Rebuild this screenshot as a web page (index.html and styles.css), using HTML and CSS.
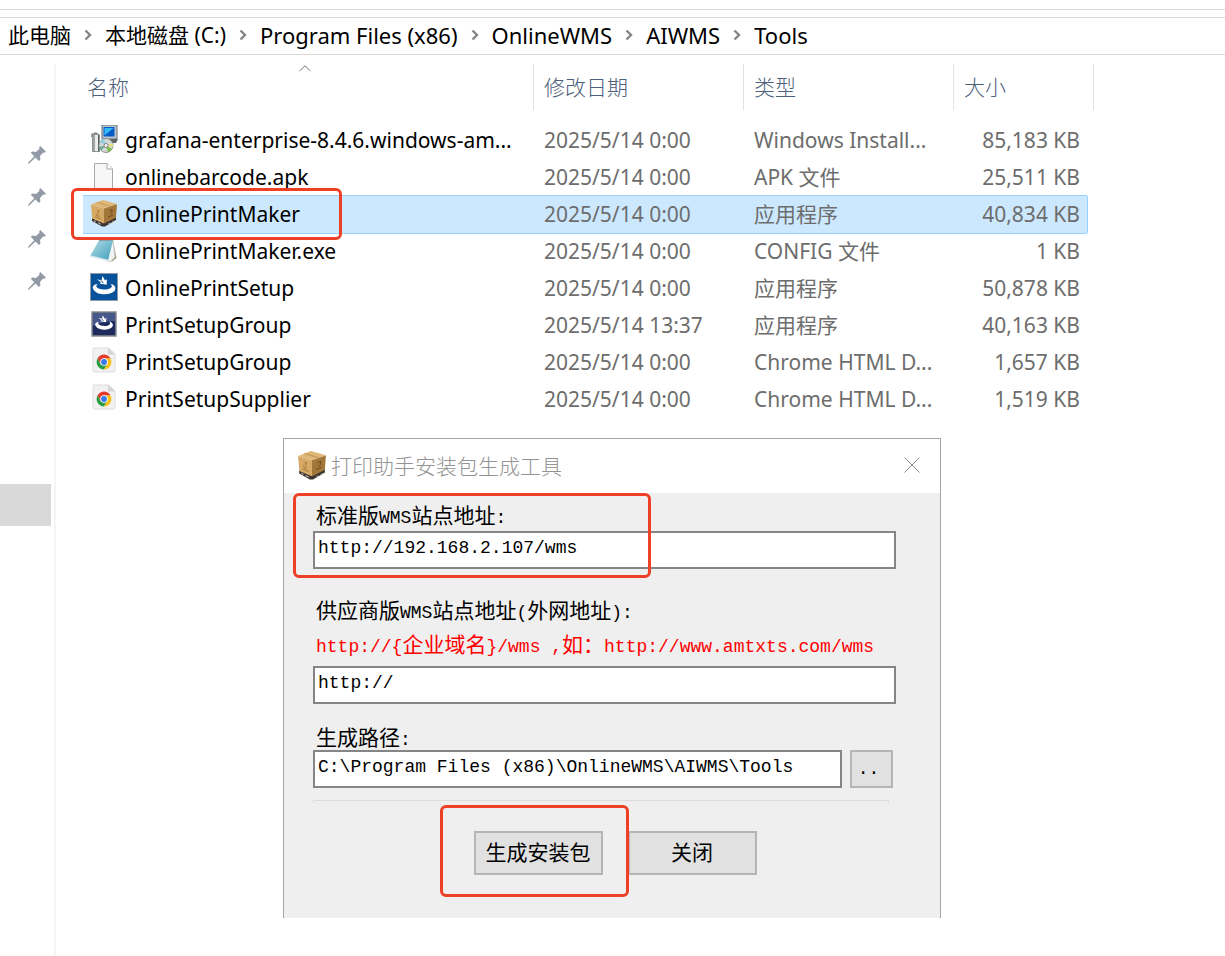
FILE: index.html
```
<!DOCTYPE html>
<html lang="zh-CN">
<head>
    <meta charset="UTF-8">
    <meta name="viewport" content="width=device-width, initial-scale=1.0">
    <title>Tools</title>
    <link rel="stylesheet" href="styles.css">
</head>
<body>
    <!-- Shared icons -->
    <svg class="sprite" aria-hidden="true">
        <symbol id="chevron" viewBox="0 0 8 12">
            <path d="M1.5 1.5L6 6L1.5 10.5" fill="none" stroke="#858585" stroke-width="2.4"/>
        </symbol>
        <symbol id="pin" viewBox="0 0 18 18">
            <path d="M12.3 0L18 5.7L16.4 6.8L15.2 6.4L12 10L12.4 13.6L11 15L7.4 11.4L1.2 17.6L0 17.8L.3 16.6L6.2 10.2L2.8 6.8L4.2 5.6L8 6L11.5 2.8L11.2 1.3Z" fill="#929ba5"/>
        </symbol>
        <symbol id="box" viewBox="0 0 28 28">
            <path d="M2 19L14 24L26 18L26 21L15 27.5L12 27.5L2 22Z" fill="#3b3632"/>
            <path d="M4 21l2 1v1.5l-2-1zM8 23l3 1.4v1.4L8 24.5zM18 24.5l2-1v1.4L18 26zM22 22.5l2-1.2v1.2l-2 1.4z" fill="#a69b8c"/>
            <path d="M1 5.5L13.8 9.5L14 24.5L2.2 19.5Z" fill="#d6a964"/>
            <path d="M13.8 9.5L27 5L26 18.5L14 24.5Z" fill="#a3763a"/>
            <path d="M1 5.5L13 1L27 5L13.8 9.5Z" fill="#dfb878"/>
            <path d="M6 3.6L19.5 7.6L21.5 6.9L8 2.9Z" fill="#c79b5b"/>
            <path d="M7 11.4l2.4.8M8.2 12v3.4M6 14.5l1 2.2 2.4.6M5 17.8l6 2.2" stroke="#a5773a" stroke-width=".9" fill="none"/>
            <path d="M19 11.8l3-1.2v3l-2 1.6M18 18.2l5-2.2" stroke="#6d4618" stroke-width=".9" fill="none"/>
        </symbol>
        <symbol id="swirl" viewBox="0 0 28 28">
            <path d="M8 11C4 11.4 1.6 13.4 3.4 16.4C6.6 22.2 19.5 22.8 24.2 18.2C27 15 24.4 11.6 20.4 10.8C23.4 13.4 21.4 15.8 16.8 16.4C11.4 17 6.6 15.4 6.4 13.2C6.3 12.2 7 11.5 8 11Z" fill="#fff"/>
            <path d="M7 6.2L11 9.4L9.4 10.4L16.6 11.8L17 6.2L15.2 7.6L12.4 3L11.6 7.4Z" fill="#fff"/>
            <path d="M11.2 7.6L13.4 10.2" stroke="#07529b"/>
        </symbol>
        <symbol id="chrome-page" viewBox="0 0 28 28">
            <path d="M3 1H19L25 7V23.5Q25 25 23.5 25H4.5Q3 25 3 23.5Z" fill="#f1f1f1" stroke="#dedede"/>
            <path d="M18 1V7.5H25Z" fill="#d5d5d5"/>
            <path d="M7.6 11.3A7.4 7.4 0 0 0 14 22.4L17.2 16.9H10.8Z" fill="#299c46"/>
            <path d="M20.4 11.3A7.4 7.4 0 0 1 14 22.4L17.2 16.9L14 11.3Z" fill="#fbc116"/>
            <path d="M7.6 11.3A7.4 7.4 0 0 1 20.4 11.3H14L10.8 16.9Z" fill="#e33b2e"/>
            <circle cx="14" cy="15" r="3.8" fill="#fff"/>
            <circle cx="14" cy="15" r="2.9" fill="#3478ea"/>
        </symbol>
    </svg>

    <div class="toolbar"></div>

    <!-- Address bar -->
    <nav class="address">
        <a href="#">此电脑</a>
        <svg class="chevron"><use href="#chevron"/></svg>
        <a href="#">本地磁盘 (C:)</a>
        <svg class="chevron"><use href="#chevron"/></svg>
        <a href="#" class="folder">Program Files (x86)</a>
        <svg class="chevron"><use href="#chevron"/></svg>
        <a href="#" class="folder">OnlineWMS</a>
        <svg class="chevron"><use href="#chevron"/></svg>
        <a href="#" class="folder">AIWMS</a>
        <svg class="chevron"><use href="#chevron"/></svg>
        <a href="#" class="folder">Tools</a>
    </nav>

    <div class="explorer">
        <!-- Quick access -->
        <aside class="sidebar">
            <div class="pin"><svg><use href="#pin"/></svg></div>
            <div class="pin"><svg><use href="#pin"/></svg></div>
            <div class="pin"><svg><use href="#pin"/></svg></div>
            <div class="pin"><svg><use href="#pin"/></svg></div>
            <div class="current"></div>
        </aside>

        <main class="content">
            <table class="files">
                <colgroup>
                    <col>
                    <col class="col-date">
                    <col class="col-type">
                    <col class="col-size">
                    <col class="col-end">
                </colgroup>
                <thead>
                    <tr>
                        <th>名称
                            <svg class="sort" viewBox="0 0 12 7"><path d="M.5 6L6 .8L11.5 6" fill="none" stroke="#777"/></svg>
                        </th>
                        <th>修改日期</th>
                        <th>类型</th>
                        <th colspan="2">大小</th>
                    </tr>
                </thead>
                <tbody>
                    <tr>
                        <td><div class="name">
                            <svg viewBox="0 0 28 28">
                                <path d="M1 9L6 7L10 10V27H2V12H1Z" fill="#8d9293"/>
                                <path d="M3 10H8V26H3Z" fill="#eceeed"/>
                                <path d="M4 10V26M8.5 10V26" stroke="#555b5d"/>
                                <path d="M12 0H27V14H12Z" fill="#bfc6ca" stroke="#667078"/>
                                <path d="M13.5 2H24.5V11.5H13.5Z" fill="#075bc5"/>
                                <path d="M14.5 3H23.5L14.5 10.5Z" fill="#35baf5"/>
                                <path d="M18 14H28L26 18H16Z" fill="#5f6466"/>
                                <circle cx="16" cy="20.5" r="7" fill="#d4d9d6" stroke="#8d9693"/>
                                <path d="M16 20.5L10 17A7 7 0 0 1 14 13.8Z" fill="#8ed0df"/>
                                <path d="M16 20.5L22 24A7 7 0 0 1 18 27.2Z" fill="#7dbd4d"/>
                                <path d="M16 20.5L22.8 18.5V22Z" fill="#e9df78"/>
                                <path d="M16 20.5L9 22L11 25.5Z" fill="#6ba99a"/>
                                <circle cx="16" cy="20.5" r="2" fill="#fff" stroke="#777"/>
                            </svg>
                            grafana-enterprise-8.4.6.windows-am...
                        </div></td>
                        <td>2025/5/14 0:00</td>
                        <td>Windows Install...</td>
                        <td>85,183 KB</td>
                        <td></td>
                    </tr>
                    <tr>
                        <td><div class="name">
                            <svg viewBox="0 0 28 28">
                                <path d="M4.5 1.5H17L22.5 7V28H4.5Z" fill="#f7f7f7" stroke="#a7a7a7"/>
                                <path d="M17 1.5V7H22.5" fill="#fff" stroke="#a7a7a7"/>
                            </svg>
                            onlinebarcode.apk
                        </div></td>
                        <td>2025/5/14 0:00</td>
                        <td>APK 文件</td>
                        <td>25,511 KB</td>
                        <td></td>
                    </tr>
                    <tr class="selected">
                        <td><div class="name">
                            <svg><use href="#box"/></svg>
                            OnlinePrintMaker
                            <span class="mark mark-file"></span>
                        </div></td>
                        <td>2025/5/14 0:00</td>
                        <td>应用程序</td>
                        <td>40,834 KB</td>
                        <td></td>
                    </tr>
                    <tr>
                        <td><div class="name">
                            <svg viewBox="0 0 28 28">
                                <defs>
                                    <linearGradient id="note" x1="0" y1="0" x2="1" y2="1">
                                        <stop offset="0" stop-color="#b5dfe8"/>
                                        <stop offset="1" stop-color="#3f9dbb"/>
                                    </linearGradient>
                                </defs>
                                <path d="M23 5L26.5 22L22 25.5L17 24Z" fill="#a99a83"/>
                                <path d="M23 4L25 21L20 26L16 24Z" fill="#eef3f3" stroke="#b5babb" stroke-width=".6"/>
                                <path d="M9 4.5L23 4L18 24.5L0 20Z" fill="url(#note)"/>
                                <path d="M9 4.5L23 4" stroke="#8aa0a6" stroke-width="1.5"/>
                                <path d="M0 20L18 24.5" stroke="#d9e9ee" stroke-width="1.5"/>
                            </svg>
                            OnlinePrintMaker.exe
                        </div></td>
                        <td>2025/5/14 0:00</td>
                        <td>CONFIG 文件</td>
                        <td>1 KB</td>
                        <td></td>
                    </tr>
                    <tr>
                        <td><div class="name">
                            <svg viewBox="0 0 28 28">
                                <path d="M.5 .5H27.5V27.5H.5Z" fill="#07529b" stroke="#8c99a5"/>
                                <use href="#swirl"/>
                            </svg>
                            OnlinePrintSetup
                        </div></td>
                        <td>2025/5/14 0:00</td>
                        <td>应用程序</td>
                        <td>50,878 KB</td>
                        <td></td>
                    </tr>
                    <tr>
                        <td><div class="name">
                            <svg viewBox="0 0 28 28">
                                <path d="M2 2H26V26H2Z" fill="#1d2b5c" stroke="#8d9094" stroke-width="1.5"/>
                                <path d="M3 3H25V11Q14 11 3 16Z" fill="#46588a"/>
                                <use href="#swirl" x="3" y="3" width="22" height="22"/>
                            </svg>
                            PrintSetupGroup
                        </div></td>
                        <td>2025/5/14 13:37</td>
                        <td>应用程序</td>
                        <td>40,163 KB</td>
                        <td></td>
                    </tr>
                    <tr>
                        <td><div class="name">
                            <svg><use href="#chrome-page"/></svg>
                            PrintSetupGroup
                        </div></td>
                        <td>2025/5/14 0:00</td>
                        <td>Chrome HTML D...</td>
                        <td>1,657 KB</td>
                        <td></td>
                    </tr>
                    <tr>
                        <td><div class="name">
                            <svg><use href="#chrome-page"/></svg>
                            PrintSetupSupplier
                        </div></td>
                        <td>2025/5/14 0:00</td>
                        <td>Chrome HTML D...</td>
                        <td>1,519 KB</td>
                        <td></td>
                    </tr>
                </tbody>
            </table>

            <!-- Package generator -->
            <section class="dialog">
                <header class="dialog-header">
                    <svg class="dialog-icon"><use href="#box"/></svg>
                    <h1>打印助手安装包生成工具</h1>
                    <button class="close" type="button" aria-label="关闭窗口">
                        <svg viewBox="0 0 16 16"><path d="M.5 .5L15.5 15.5M15.5 .5L.5 15.5" stroke="#8a8a8a"/></svg>
                    </button>
                </header>
                <form class="dialog-body">
                    <div class="field">
                        <label for="site">标准版<span class="latin">WMS</span>站点地址<span class="latin">:</span></label>
                        <input type="text" id="site" value="http://192.168.2.107/wms">
                        <span class="mark mark-site"></span>
                    </div>
                    <div class="field">
                        <label for="supplier">供应商版<span class="latin">WMS</span>站点地址<span class="latin">(</span>外网地址<span class="latin">):</span></label>
                        <p class="hint"><span class="latin">http://{</span>企业域名<span class="latin">}/wms ,</span>如：<span class="latin">http://www.amtxts.com/wms</span></p>
                        <input type="text" id="supplier" value="http://">
                    </div>
                    <div class="field field-path">
                        <label for="path">生成路径<span class="latin">:</span></label>
                        <div class="path-row">
                            <input type="text" id="path" value="C:\Program Files (x86)\OnlineWMS\AIWMS\Tools">
                            <button class="btn btn-browse" type="button">..</button>
                        </div>
                    </div>
                    <div class="divider"></div>
                    <div class="actions">
                        <div class="action">
                            <button class="btn" type="button">生成安装包</button>
                            <span class="mark mark-build"></span>
                        </div>
                        <button class="btn" type="button">关闭</button>
                    </div>
                </form>
            </section>
        </main>
    </div>
</body>
</html>
```
FILE: styles.css
```
* {
    margin: 0;
    padding: 0;
    box-sizing: border-box;
}

body {
    display: flex;
    flex-direction: column;
    min-height: 100vh;
    font-family: "Noto Sans", "Noto Sans CJK SC", sans-serif;
    font-size: 21px;
    background: #fff;
    color: #000;
}

svg {
    display: block;
    flex-shrink: 0;
}

.sprite {
    position: absolute;
    width: 0;
    height: 0;
}

/* Address bar */
.toolbar {
    height: 10px;
    border-bottom: 1px solid #d9d9d9;
}

.address {
    display: flex;
    align-items: center;
    gap: 13px;
    height: 38px;
    margin-top: 7px;
    padding-left: 8px;
    padding-bottom: 2px;
    border-top: 1px solid #d9d9d9;
    border-bottom: 1px solid #d9d9d9;
    white-space: nowrap;
}

.address a {
    color: #000;
    line-height: 30px;
    text-decoration: none;
}

.address .folder {
    font-size: 22px;
}

.chevron {
    width: 8px;
    height: 12px;
}

.explorer {
    display: flex;
    flex: 1;
    margin-top: 9px;
}

/* Sidebar */
.sidebar {
    width: 56px;
    padding-top: 70px;
    border-right: 2px solid #f5f5f5;
}

.pin {
    display: flex;
    align-items: center;
    justify-content: flex-end;
    height: 42px;
    padding-right: 8px;
}

.pin svg {
    width: 18px;
    height: 18px;
}

.current {
    height: 42px;
    margin-top: 182px;
    margin-right: 3px;
    background: #d9d9d9;
}

.content {
    flex: 1;
    padding-left: 27px;
    padding-right: 131px;
}

/* File list */
.files {
    width: 100%;
    table-layout: fixed;
    border-spacing: 0;
    white-space: nowrap;
}

.col-date,
.col-type {
    width: 210px;
}

.col-size {
    width: 133px;
}

.col-end {
    width: 7px;
}

.files th {
    position: relative;
    height: 46px;
    padding-left: 10px;
    padding-bottom: 2px;
    border-right: 1px solid #e2e2e2;
    color: #4c607a;
    font-weight: 300;
    text-align: left;
}

.files th:first-child {
    padding-left: 4px;
}

.sort {
    position: absolute;
    top: 1px;
    left: calc(50% - 9px);
    width: 12px;
    height: 7px;
}

.files tbody::before {
    content: "";
    display: block;
    height: 12px;
}

.files td {
    height: 37px;
    padding-left: 10px;
    padding-bottom: 2px;
    line-height: 34px;
    color: #6d6d6d;
}

.files td:first-child {
    padding-left: 7px;
    color: #000;
}

.files td:nth-child(4) {
    padding-right: 7px;
    text-align: right;
}

.files td:last-child {
    padding: 0;
}

.name {
    position: relative;
    display: flex;
    align-items: center;
    gap: 7px;
}

.name svg {
    width: 28px;
    height: 28px;
    margin-bottom: 2px;
}

.selected td:not(:last-child) {
    background: #cce8ff;
    box-shadow: 0 -1px #99d1ff, 0 1px #99d1ff;
}

.selected td:last-child {
    border-left: 1px solid #99d1ff;
}

/* Red marks */
.mark {
    position: absolute;
    z-index: 1;
    border: 3px solid #ee4026;
    border-radius: 6px;
    pointer-events: none;
}

.mark-file {
    top: -9px;
    left: -19px;
    width: 271px;
    height: 52px;
}

.mark-site {
    top: -9px;
    left: -20px;
    width: 358px;
    height: 85px;
}

.mark-build {
    top: -26px;
    right: -26px;
    bottom: -22px;
    left: -34px;
}

/* Dialog */
.dialog {
    max-width: 658px;
    margin-top: 20px;
    margin-left: 200px;
    border: 1px solid #a5a5a5;
    border-bottom: none;
    background: #efefef;
}

.dialog-header {
    display: flex;
    align-items: center;
    gap: 4px;
    height: 54px;
    padding: 0 20px 3px 13px;
    background: #fff;
}

.dialog-icon {
    width: 30px;
    height: 30px;
}

.dialog-header h1 {
    flex: 1;
    color: #939393;
    font-size: 21px;
    font-weight: 300;
}

.close {
    border: none;
    background: none;
}

.close svg {
    width: 16px;
    height: 16px;
}

.dialog-body {
    padding: 9px 44px 43px 29px;
    font-family: "Liberation Mono", "Noto Sans CJK SC", monospace;
}

.field {
    position: relative;
    margin-bottom: 28px;
}

.field label {
    display: block;
    height: 29px;
    padding-left: 3px;
    line-height: 31px;
}

.latin {
    font-size: 18px;
}

.hint {
    height: 40px;
    padding-left: 3px;
    line-height: 42px;
    color: #f00;
    white-space: nowrap;
}

.field input {
    display: block;
    width: 100%;
    height: 38px;
    padding: 0 3px 4px;
    border: 2px solid #858585;
    background: #fff;
    color: #000;
    font-family: inherit;
    font-size: 18px;
    outline: none;
}

.field-path {
    margin-top: -4px;
    margin-bottom: 12px;
}

.field-path label {
    height: 22px;
    line-height: 24px;
}

.path-row {
    display: flex;
    gap: 8px;
    padding-right: 3px;
}

.btn {
    width: 129px;
    height: 44px;
    padding-bottom: 5px;
    border: 2px solid #b5b5b5;
    background: #e1e1e1;
    color: #000;
    font-family: inherit;
    font-size: 21px;
}

.btn-browse {
    flex-shrink: 0;
    width: 43px;
    height: 38px;
    padding: 0 6px 0 0;
    font-size: 18px;
}

.divider {
    height: 3px;
    margin-right: 7px;
    border: 1px solid #dcdcdc;
    border-bottom: none;
}

.actions {
    display: flex;
    justify-content: center;
    gap: 25px;
    margin-top: 28px;
    padding-left: 21px;
}

.action {
    position: relative;
}
```
